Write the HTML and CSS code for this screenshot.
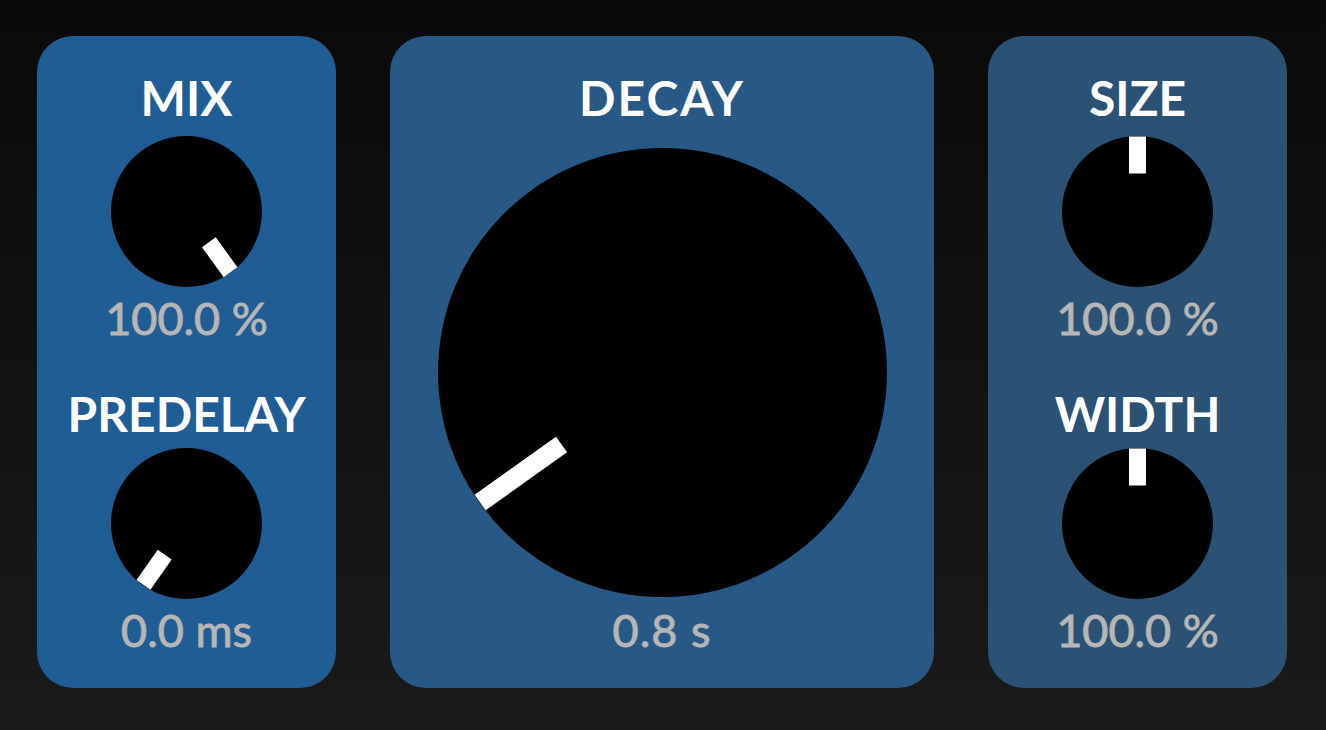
FILE: index.html
```html
<!DOCTYPE html>
<html lang="en">
<head>
<meta charset="utf-8">
<title>Reverb</title>
<link rel="stylesheet" href="styles.css">
</head>
<body>
<main class="rack">
  <section class="panel panel-narrow panel-left">
    <div class="control">
      <h2 class="title">MIX</h2>
      <svg class="knob knob-small" viewBox="-75.5 -75.5 151 151">
        <circle r="75.5" fill="#000"/>
        <rect x="-8.5" y="-75" width="17" height="37" fill="#fff" transform="rotate(144)"/>
      </svg>
      <div class="value">100.0 %</div>
    </div>
    <div class="control control-lower">
      <h2 class="title">PREDELAY</h2>
      <svg class="knob knob-small" viewBox="-75.5 -75.5 151 151">
        <circle r="75.5" fill="#000"/>
        <rect x="-8.5" y="-75" width="17" height="37" fill="#fff" transform="rotate(-145)"/>
      </svg>
      <div class="value">0.0 ms</div>
    </div>
  </section>

  <section class="panel panel-wide">
    <div class="control">
      <h2 class="title title-wide">DECAY</h2>
      <svg class="knob knob-large" viewBox="-224.5 -224.5 449 449">
        <circle r="224.5" fill="#000"/>
        <rect x="-9.5" y="-224" width="19" height="100" fill="#fff" transform="rotate(-125.5)"/>
      </svg>
      <div class="value value-large">0.8 s</div>
    </div>
  </section>

  <section class="panel panel-narrow panel-right">
    <div class="control">
      <h2 class="title">SIZE</h2>
      <svg class="knob knob-small" viewBox="-75.5 -75.5 151 151">
        <circle r="75.5" fill="#000"/>
        <rect x="-8.5" y="-75" width="17" height="37" fill="#fff"/>
      </svg>
      <div class="value">100.0 %</div>
    </div>
    <div class="control control-lower">
      <h2 class="title">WIDTH</h2>
      <svg class="knob knob-small" viewBox="-75.5 -75.5 151 151">
        <circle r="75.5" fill="#000"/>
        <rect x="-8.5" y="-75" width="17" height="37" fill="#fff"/>
      </svg>
      <div class="value">100.0 %</div>
    </div>
  </section>
</main>
</body>
</html>
```

FILE: styles.css
```css
* {
  box-sizing: border-box;
}

html, body {
  margin: 0;
  height: 100%;
}

body {
  background: linear-gradient(180deg, #0a0a0a 0%, #111111 45%, #1a1a1a 100%);
  font-family: "Lato", "Open Sans", "Liberation Sans", sans-serif;
  overflow: hidden;
}

.rack {
  display: flex;
  gap: 54px;
  height: 730px;
  padding: 36px 39px 42px 37px;
}

.panel {
  display: flex;
  flex-direction: column;
  align-items: center;
  height: 652px;
  border-radius: 36px;
  padding-top: 38px;
}

.panel-narrow {
  width: 299px;
}

.panel-wide {
  width: 544px;
  background: #285886;
}

.panel-left {
  background: #215d95;
}

.panel-right {
  background: #2b5174;
}

.control {
  display: flex;
  flex-direction: column;
  align-items: center;
}

.control-lower {
  margin-top: 49px;
}

.title {
  margin: 0 0 14px;
  height: 48px;
  font-size: 48px;
  line-height: 48px;
  font-weight: 700;
  color: #ffffff;
  letter-spacing: 0;
  white-space: nowrap;
}

.title-wide {
  letter-spacing: 2px;
}

.control-lower .title {
  margin-bottom: 10px;
}

.knob {
  display: block;
}

.knob-small {
  width: 151px;
  height: 151px;
}

.knob-large {
  width: 449px;
  height: 449px;
  margin-top: 12px;
}

.value {
  margin-top: 8px;
  height: 46px;
  font-size: 45px;
  line-height: 46px;
  font-weight: 400;
  color: #b6b6b6;
  -webkit-text-stroke: 0.9px #b6b6b6;
  white-space: nowrap;
}

.value-large {
  margin-top: 10px;
  letter-spacing: 1px;
}
```
